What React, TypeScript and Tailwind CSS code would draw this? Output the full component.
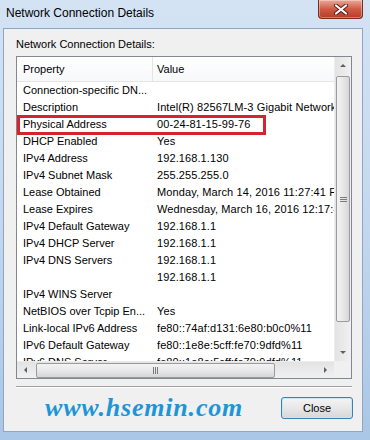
import React from "react";

const rows: [string, string][] = [
  ["Connection-specific DN...", ""],
  ["Description", "Intel(R) 82567LM-3 Gigabit Network Connection"],
  ["Physical Address", "00-24-81-15-99-76"],
  ["DHCP Enabled", "Yes"],
  ["IPv4 Address", "192.168.1.130"],
  ["IPv4 Subnet Mask", "255.255.255.0"],
  ["Lease Obtained", "Monday, March 14, 2016 11:27:41 PM"],
  ["Lease Expires", "Wednesday, March 16, 2016 12:17:41 AM"],
  ["IPv4 Default Gateway", "192.168.1.1"],
  ["IPv4 DHCP Server", "192.168.1.1"],
  ["IPv4 DNS Servers", "192.168.1.1"],
  ["", "192.168.1.1"],
  ["IPv4 WINS Server", ""],
  ["NetBIOS over Tcpip En...", "Yes"],
  ["Link-local IPv6 Address", "fe80::74af:d131:6e80:b0c0%11"],
  ["IPv6 Default Gateway", "fe80::1e8e:5cff:fe70:9dfd%11"],
  ["IPv6 DNS Server", "fe80::1e8e:5cff:fe70:9dfd%11"],
];

function Arrow({ dir }: { dir: "up" | "down" | "left" | "right" }) {
  const pts = {
    up: "1,4 4,1 7,4",
    down: "1,1 4,4 7,1",
    left: "4,1 1,4 4,7",
    right: "1,1 4,4 1,7",
  }[dir];
  const vert = dir === "up" || dir === "down";
  return (
    <svg width={vert ? 8 : 5} height={vert ? 5 : 8} viewBox={vert ? "0 0 8 5" : "0 0 5 8"}>
      <polygon points={pts} fill="#606060" />
    </svg>
  );
}

export default function App() {
  return (
    <div
      className="relative w-[370px] h-[440px] overflow-hidden flex flex-col pl-[3px] pr-[7px] pb-[8px] bg-gradient-to-b from-[#d3e3f4] via-[#c3d8ef] to-[#a9c6e6]"
      style={{ fontFamily: '"Liberation Sans", Arial, sans-serif' }}
    >
      {/* Title bar */}
      <div className="h-[28px] shrink-0 flex items-start justify-between">
        <div className="pt-[6px] pl-[3px] text-[12px] text-black leading-[15px]">
          Network Connection Details
        </div>
        <div className="w-[45px] h-[19px] rounded-b-[4px] border border-t-0 border-[#7a2a20] bg-gradient-to-b from-[#e9a898] via-[#cf5b45] to-[#b73a22] flex items-center justify-center shadow-[inset_0_0_0_1px_rgba(255,255,255,0.35)]">
          <svg width="14" height="11" viewBox="0 0 14 11">
            <path d="M2 1.5 L12 9.5 M12 1.5 L2 9.5" stroke="#5a1e15" strokeWidth="4" strokeLinecap="round" />
            <path d="M2 1.5 L12 9.5 M12 1.5 L2 9.5" stroke="#ffffff" strokeWidth="2.2" strokeLinecap="round" />
          </svg>
        </div>
      </div>

      {/* Client area */}
      <div className="flex-1 flex flex-col border border-[#8fa6c0] bg-[#f0f0f0] pl-[12px] pr-[10px]">
        <div className="pt-[9px] text-[11px] leading-[13px] text-black">
          Network Connection Details:
        </div>

        {/* List view */}
        <div className="mt-[5px] h-[323px] border border-[#828790] bg-white flex flex-col">
          <div className="flex flex-1 min-h-0">
            <div className="flex-1 min-w-0 overflow-hidden flex flex-col">
              <div className="h-[25px] shrink-0 flex border-b border-[#e5e5e5] bg-gradient-to-b from-white to-[#f7f8fa] text-[11px] text-black">
                <div className="w-[136px] shrink-0 pl-[6px] flex items-center border-r border-[#e5e5e5]">
                  Property
                </div>
                <div className="flex-1 pl-[4px] flex items-center">Value</div>
              </div>
              <div className="flex flex-col">
                {rows.map(([p, v], i) => (
                  <div key={i} className="h-[17px] shrink-0 flex items-center text-[11px] text-black whitespace-nowrap">
                    <div className="w-[136px] shrink-0 pl-[6px] overflow-hidden">{p}</div>
                    <div className="pl-[4px] tracking-[0.1px]">{v}</div>
                  </div>
                ))}
              </div>
            </div>
            {/* vertical scrollbar */}
            <div className="w-[17px] shrink-0 flex flex-col bg-gradient-to-r from-[#e3e3e3] to-[#f1f1f1] border-l border-[#ececec]">
              <div className="h-[17px] flex items-center justify-center">
                <Arrow dir="up" />
              </div>
              <div className="mt-[2px] mx-[1px] h-[246px] rounded-[2px] border border-[#9b9b9b] bg-gradient-to-r from-[#f3f3f3] via-[#e8e8e8] to-[#d6d6d6] flex items-center justify-center">
                <div className="flex flex-col gap-[1px]">
                  <div className="w-[7px] h-[1px] bg-[#7a7a7a]" />
                  <div className="w-[7px] h-[1px] bg-[#7a7a7a]" />
                  <div className="w-[7px] h-[1px] bg-[#7a7a7a]" />
                </div>
              </div>
              <div className="flex-1" />
              <div className="h-[17px] flex items-center justify-center">
                <Arrow dir="down" />
              </div>
            </div>
          </div>
          {/* horizontal scrollbar */}
          <div className="h-[17px] shrink-0 flex">
            <div className="flex-1 flex items-center bg-gradient-to-b from-[#e3e3e3] to-[#f1f1f1] border-t border-[#ececec]">
              <div className="w-[17px] h-full flex items-center justify-center">
                <Arrow dir="left" />
              </div>
              <div className="ml-[2px] w-[239px] h-[15px] rounded-[2px] border border-[#9b9b9b] bg-gradient-to-b from-[#f3f3f3] via-[#e8e8e8] to-[#d6d6d6] flex items-center justify-center">
                <div className="flex gap-[1px]">
                  <div className="w-[1px] h-[7px] bg-[#7a7a7a]" />
                  <div className="w-[1px] h-[7px] bg-[#7a7a7a]" />
                  <div className="w-[1px] h-[7px] bg-[#7a7a7a]" />
                </div>
              </div>
              <div className="flex-1" />
              <div className="w-[17px] h-full flex items-center justify-center">
                <Arrow dir="right" />
              </div>
            </div>
            <div className="w-[17px] bg-[#f0f0f0]" />
          </div>
        </div>

        <div className="mt-[7px] h-[1px] bg-[#a0a0a0] border-b border-white box-content" />

        <div className="mt-[9px] flex items-center justify-between">
          <div
            className="pl-[29px] text-[26px] leading-[22px] font-bold italic text-[#1d95d6] tracking-[0.8px]"
            style={{ fontFamily: '"Liberation Serif", "Times New Roman", serif' }}
          >
            www.hsemin.com
          </div>
          <div className="w-[72px] h-[22px] mr-[-1px] rounded-[3px] border border-[#3c7fb1] bg-gradient-to-b from-[#f4f4f4] via-[#e8e8e8] to-[#d6d6d6] shadow-[inset_0_0_0_1px_#c7e6f6] flex items-center justify-center text-[11px] text-black">
            Close
          </div>
        </div>
      </div>

      <div className="absolute left-[17px] top-[115px] w-[249px] h-[20px] border-[3px] border-[#d42430]" />
    </div>
  );
}
